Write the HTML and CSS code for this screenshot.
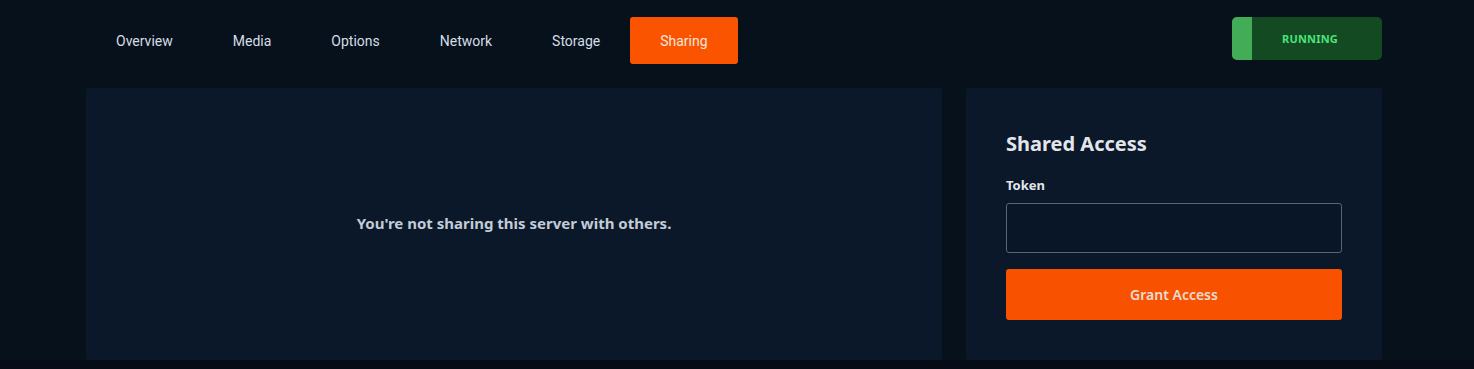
FILE: index.html
```html
<!DOCTYPE html>
<html lang="en">

<head>
    <meta charset="UTF-8">
    <meta name="viewport" content="width=device-width, initial-scale=1.0">
    <title>Sharing</title>
    <link rel="stylesheet" href="styles.css">
</head>

<body>
    <div class="page">
        <div class="container">
            <div class="topbar">
                <nav class="tabs">
                    <a href="javascript:;" class="tab">Overview</a>
                    <a href="javascript:;" class="tab">Media</a>
                    <a href="javascript:;" class="tab">Options</a>
                    <a href="javascript:;" class="tab">Network</a>
                    <a href="javascript:;" class="tab">Storage</a>
                    <a href="javascript:;" class="tab active">Sharing</a>
                </nav>
                <div class="status">
                    <span class="status-bar"></span>
                    <span class="status-text">RUNNING</span>
                </div>
            </div>

            <div class="content">
                <div class="panel empty">
                    <p>You're not sharing this server with others.</p>
                </div>
                <div class="panel side">
                    <h2>Shared Access</h2>
                    <label for="token">Token</label>
                    <input id="token" type="text">
                    <button type="button">Grant Access</button>
                </div>
            </div>
        </div>
    </div>
</body>

</html>
```

FILE: styles.css
```css
html,
body {
    margin: 0;
    background-color: #050c15;
    font-family: "Noto Sans", "Open Sans", sans-serif;
}

.page {
    background-color: #07111c;
    height: 360px;
    padding-right: 6px;
}

.container {
    width: 1296px;
    margin: 0 auto;
    padding-top: 17px;
}

.topbar {
    display: flex;
    justify-content: space-between;
    align-items: flex-start;
    height: 71px;
}

.tabs {
    display: flex;
}

.tab {
    display: block;
    height: 47px;
    line-height: 49px;
    padding: 0 30px;
    font-family: Roboto, "Liberation Sans", sans-serif;
    font-size: 14px;
    color: #d5dde6;
    text-decoration: none;
    border-radius: 3px;
}

.tab.active {
    background-color: #fa5400;
    color: #f3e6df;
}

.status {
    display: flex;
    width: 150px;
    height: 43px;
    border-radius: 5px;
    overflow: hidden;
    background-color: #134a22;
}

.status-bar {
    width: 20px;
    background-color: #42ad56;
}

.status-text {
    flex: 1;
    text-align: center;
    line-height: 43px;
    padding-right: 14px;
    font-size: 11px;
    font-weight: 700;
    color: #4be37a;
    letter-spacing: 0.2px;
}

.content {
    display: flex;
    gap: 24px;
}

.panel {
    background-color: #0a182a;
    border-radius: 2px;
    height: 272px;
    box-sizing: border-box;
}

.empty {
    flex: 1;
    display: flex;
    justify-content: center;
    align-items: center;
    padding-bottom: 2px;
}

.empty p {
    margin: 0;
    font-size: 15px;
    font-weight: 700;
    color: #c3ccd6;
}

.side {
    width: 416px;
    padding: 41px 40px 40px;
    display: flex;
    flex-direction: column;
}

.side h2 {
    margin: 0;
    font-size: 20px;
    font-weight: 700;
    line-height: 30px;
    color: #e2e6ea;
}

.side label {
    margin-top: 17px;
    font-size: 13px;
    font-weight: 700;
    color: #e2e6ea;
    line-height: 18px;
}

.side input {
    margin-top: 9px;
    height: 50px;
    box-sizing: border-box;
    background-color: #081627;
    border: 1px solid #5b6571;
    border-radius: 3px;
    color: #e2e6ea;
    padding: 0 12px;
    outline: none;
}

.side button {
    margin-top: 16px;
    height: 51px;
    border: none;
    border-radius: 3px;
    background-color: #f85200;
    color: #eadcd3;
    font-family: "Noto Sans", "Open Sans", sans-serif;
    font-size: 14px;
    font-weight: 600;
    cursor: pointer;
}
```
